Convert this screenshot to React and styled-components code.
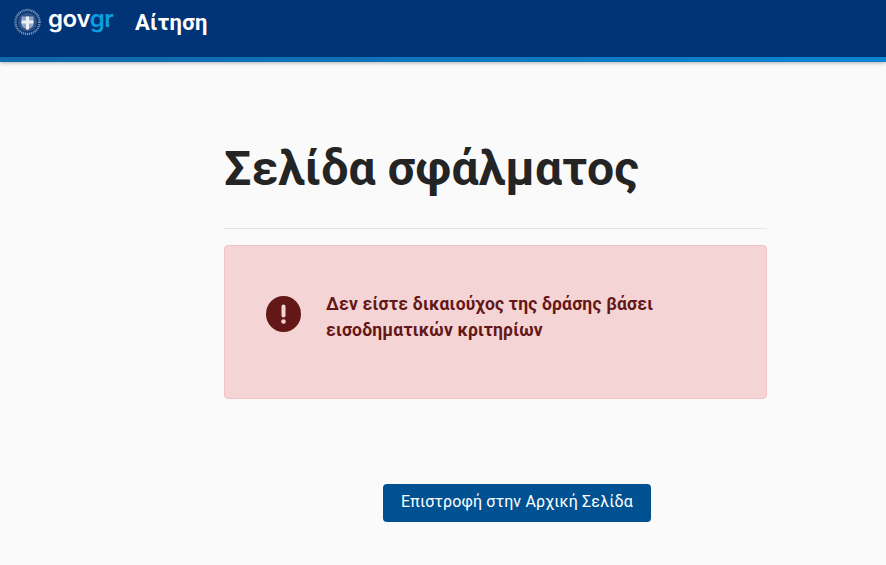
import React from 'react'
import styled, { createGlobalStyle } from 'styled-components'

const GlobalStyle = createGlobalStyle`
    html, body {
        margin: 0;
        background: #fafafa;
        font-family: Roboto, "Noto Sans", sans-serif;
    }
`;

const Header = styled.header`
    height: 62px;
    box-sizing: border-box;
    background: #003476;
    border-bottom: 5px solid #0a7cc6;
    border-image: linear-gradient(90deg, #0f68aa, #0a85d2) 1;
    box-shadow: 0 1px 4px rgba(0, 0, 0, 0.3);
    display: flex;
    align-items: flex-start;
    padding: 7px 0 0 14px;
`;

const Logo = styled.div`
    display: flex;
    align-items: center;
    gap: 6px;
    width: 121px;
    height: 30px;
`;

const LogoWord = styled.span`
    font-family: Inter, Roboto, sans-serif;
    font-size: 24px;
    font-weight: 600;
    line-height: 24px;
    letter-spacing: -0.4px;
    margin-top: -6px;
    color: #fff;
`;

const LogoAccent = styled.span`
    color: #0a9fe2;
`;

const Title = styled.div`
    color: #fff;
    font-size: 22px;
    font-weight: 700;
    line-height: 32px;
    letter-spacing: 0.3px;
`;

const Main = styled.main`
    width: 543px;
    margin-left: 224px;
    padding-top: 77px;
`;

const Heading = styled.h1`
    margin: 0;
    color: #242424;
    font-size: 48px;
    font-weight: 700;
    line-height: 60px;
    letter-spacing: 0.2px;
    padding-bottom: 29px;
    border-bottom: 1px solid #e3e3e3;
`;

const Alert = styled.div`
    margin-top: 16px;
    height: 154px;
    box-sizing: border-box;
    background: #f4d4d4;
    border: 1px solid #f0c4c4;
    border-radius: 4px;
    display: flex;
    align-items: center;
    gap: 25px;
    padding: 0 41px 16px;
`;

const AlertText = styled.p`
    margin: 5px 0 0;
    color: #641717;
    font-size: 17.5px;
    font-weight: 700;
    line-height: 26px;
    letter-spacing: 0.2px;
    width: 380px;
`;

const ButtonRow = styled.div`
    display: flex;
    justify-content: center;
    margin-top: 85px;
    padding-left: 43px;
`;

const Button = styled.button`
    width: 268px;
    height: 38px;
    background: #005192;
    border: none;
    border-radius: 4px;
    color: #fff;
    font-family: inherit;
    font-size: 16px;
    font-weight: 400;
    line-height: 36px;
    letter-spacing: 0.16px;
    padding: 0 0 2px;
`;

const Emblem = () => (
    <svg width="28" height="28" viewBox="0 0 28 28">
        <circle cx="13.500" cy="14" r="12" fill="none" stroke="#7f93b3" strokeWidth="2.400" strokeDasharray="1.200 0.800" />
        <circle cx="13.500" cy="14" r="9.600" fill="#2f5288" />
        <path d="M7.500 8.500h12v7.500c0 2.800-3 4.500-6 5.500-3-1-6-2.700-6-5.500z" fill="#93a8c8" />
        <path d="M12 8.500h3v13h-3zM7.500 12.500h12v3h-12z" fill="#eef2f8" />
    </svg>
)

const ErrorIcon = () => (
    <svg width="35" height="36" viewBox="0 0 35 36">
        <ellipse cx="17.500" cy="18" rx="17.500" ry="18" fill="#641717" />
        <rect x="15.500" y="8.500" width="4" height="13" rx="2" fill="#f4d4d4" />
        <circle cx="17.500" cy="25.500" r="2.300" fill="#f4d4d4" />
    </svg>
)

const App = () => {
    return (
        <>
            <GlobalStyle />
            <Header>
                <Logo>
                    <Emblem />
                    <LogoWord>gov<LogoAccent>gr</LogoAccent></LogoWord>
                </Logo>
                <Title>Αίτηση</Title>
            </Header>
            <Main>
                <Heading>Σελίδα σφάλματος</Heading>
                <Alert>
                    <ErrorIcon />
                    <AlertText>Δεν είστε δικαιούχος της δράσης βάσει εισοδηματικών κριτηρίων</AlertText>
                </Alert>
                <ButtonRow>
                    <Button>Επιστροφή στην Αρχική Σελίδα</Button>
                </ButtonRow>
            </Main>
        </>
    )
}

export default App
